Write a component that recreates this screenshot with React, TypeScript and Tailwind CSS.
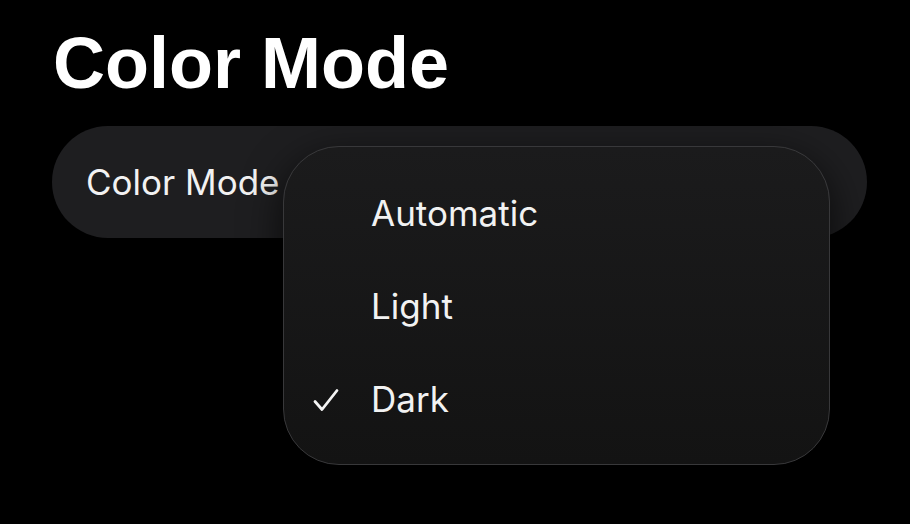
import { useState } from "react";

const OPTIONS = ["Automatic", "Light", "Dark"];

function CheckMark() {
  return (
    <svg width="26" height="24" viewBox="0 0 26 24" fill="none">
      <path
        d="M2 13.5 L9 21.5 L24 2.5"
        stroke="#f4f4f4"
        strokeWidth="2.8"
        strokeLinecap="round"
        strokeLinejoin="round"
      />
    </svg>
  );
}

export default function App() {
  const [mode, setMode] = useState("Dark");

  return (
    <div
      className="w-[910px] h-[524px] bg-black overflow-hidden px-[52px] pt-[27px]"
      style={{ fontFamily: "Inter, 'Noto Sans', sans-serif" }}
    >
      <h1
        className="text-[72px] leading-none font-bold text-white pl-[1px]"
        style={{ fontFamily: "'Liberation Sans', Arial, sans-serif" }}
      >
        Color Mode
      </h1>

      <div className="relative mt-[27px] w-[815px]">
        {/* Setting row */}
        <div className="h-[112px] rounded-full bg-[#1e1e20] flex items-center pl-[34px]">
          <span className="text-[35px] leading-none text-[#f2f2f2]">
            Color Mode
          </span>
        </div>

        {/* Popup menu */}
        <div className="absolute left-[231px] top-[20px] w-[547px] h-[319px] rounded-[56px] border border-[#38383a] bg-gradient-to-b from-[#1b1b1c] to-[#131313] shadow-[0_12px_40px_rgba(0,0,0,0.7)] pt-[20px]">
          {OPTIONS.map((opt) => (
            <button
              key={opt}
              onClick={() => setMode(opt)}
              className="w-full h-[93px] flex items-center text-left"
            >
              <span className="w-[87px] pl-[29px] flex items-center">
                {mode === opt && <CheckMark />}
              </span>
              <span className="text-[35px] leading-none text-[#f2f2f2]">
                {opt}
              </span>
            </button>
          ))}
        </div>
      </div>
    </div>
  );
}
